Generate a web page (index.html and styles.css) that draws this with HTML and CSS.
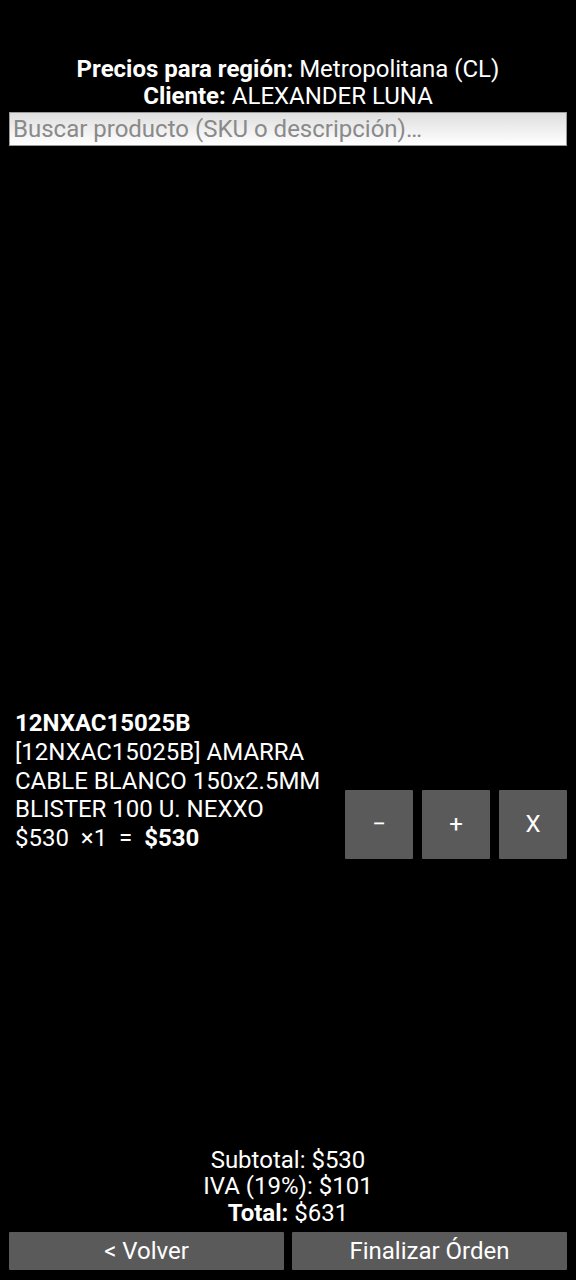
FILE: index.html
```html
<!DOCTYPE html>
<html lang="es">
<head>
<meta charset="utf-8">
<title>Orden</title>
<link rel="stylesheet" href="styles.css">
</head>
<body>
<div class="app">
  <header class="header">
    <div class="line"><b>Precios para región:</b> Metropolitana (CL)</div>
    <div class="line"><b>Cliente:</b> ALEXANDER LUNA</div>
  </header>
  <div class="search-wrap">
    <input class="search" type="text" placeholder="Buscar producto (SKU o descripción)…">
  </div>
  <main class="list">
    <div class="item">
      <div class="item-text">
        <div class="sku">12NXAC15025B</div>
        <div class="desc">[12NXAC15025B] AMARRA<br>CABLE BLANCO 150x2.5MM<br>BLISTER 100 U. NEXXO</div>
        <div class="price">$530 &nbsp;×1 &nbsp;= &nbsp;<b>$530</b></div>
      </div>
      <div class="item-actions">
        <button class="sq-btn">−</button>
        <button class="sq-btn">+</button>
        <button class="sq-btn">X</button>
      </div>
    </div>
  </main>
  <footer class="footer">
    <div class="totals">
      <div>Subtotal: $530</div>
      <div>IVA (19%): $101</div>
      <div><b>Total:</b> $631</div>
    </div>
    <div class="footer-actions">
      <button class="wide-btn">&lt; Volver</button>
      <button class="wide-btn">Finalizar Órden</button>
    </div>
  </footer>
</div>
</body>
</html>
```

FILE: styles.css
```css
html, body {
  margin: 0;
  padding: 0;
  background: #000;
}
body {
  font-family: Roboto, "Noto Sans", sans-serif;
  color: #fff;
}
.app {
  height: 1280px;
  display: flex;
  flex-direction: column;
}
.header {
  padding-top: 56px;
  text-align: center;
  font-size: 24px;
  line-height: 27px;
}
.header b {
  font-weight: 700;
}
.search-wrap {
  padding: 2px 9px 0 9px;
}
.search {
  box-sizing: border-box;
  width: 100%;
  height: 34px;
  margin: 0;
  border: 1px solid #9a9a9a;
  background: linear-gradient(#dedede, #ffffff);
  font-family: Roboto, "Noto Sans", sans-serif;
  font-size: 24px;
  padding: 0 3px;
  color: #333;
  outline: none;
}
.search::placeholder {
  color: #8a8a8a;
}
.list {
  flex: 1;
  display: flex;
  flex-direction: column;
  padding-top: 563px;
}
.item {
  display: flex;
  align-items: flex-end;
  justify-content: space-between;
  padding: 0 9px 0 15px;
}
.item-text {
  font-size: 24px;
  line-height: 28.8px;
  padding-bottom: 6px;
}
.sku {
  font-weight: 700;
}
.price b {
  font-weight: 700;
}
.item-actions {
  display: flex;
  gap: 9px;
}
.sq-btn {
  width: 68px;
  height: 69px;
  border: none;
  background: #5a5a5a;
  color: #fff;
  font-family: Roboto, "Noto Sans", sans-serif;
  font-size: 24px;
  padding: 0;
  border-radius: 1px;
}
.footer {
  padding: 0 9px 10px 9px;
}
.totals {
  text-align: center;
  font-size: 24px;
  line-height: 26.5px;
}
.footer-actions {
  display: flex;
  gap: 8px;
  margin-top: 6px;
}
.wide-btn {
  flex: 1;
  height: 38px;
  border: none;
  background: #5a5a5a;
  color: #fff;
  font-family: Roboto, "Noto Sans", sans-serif;
  font-size: 24px;
  padding: 0;
  border-radius: 1px;
}
```
